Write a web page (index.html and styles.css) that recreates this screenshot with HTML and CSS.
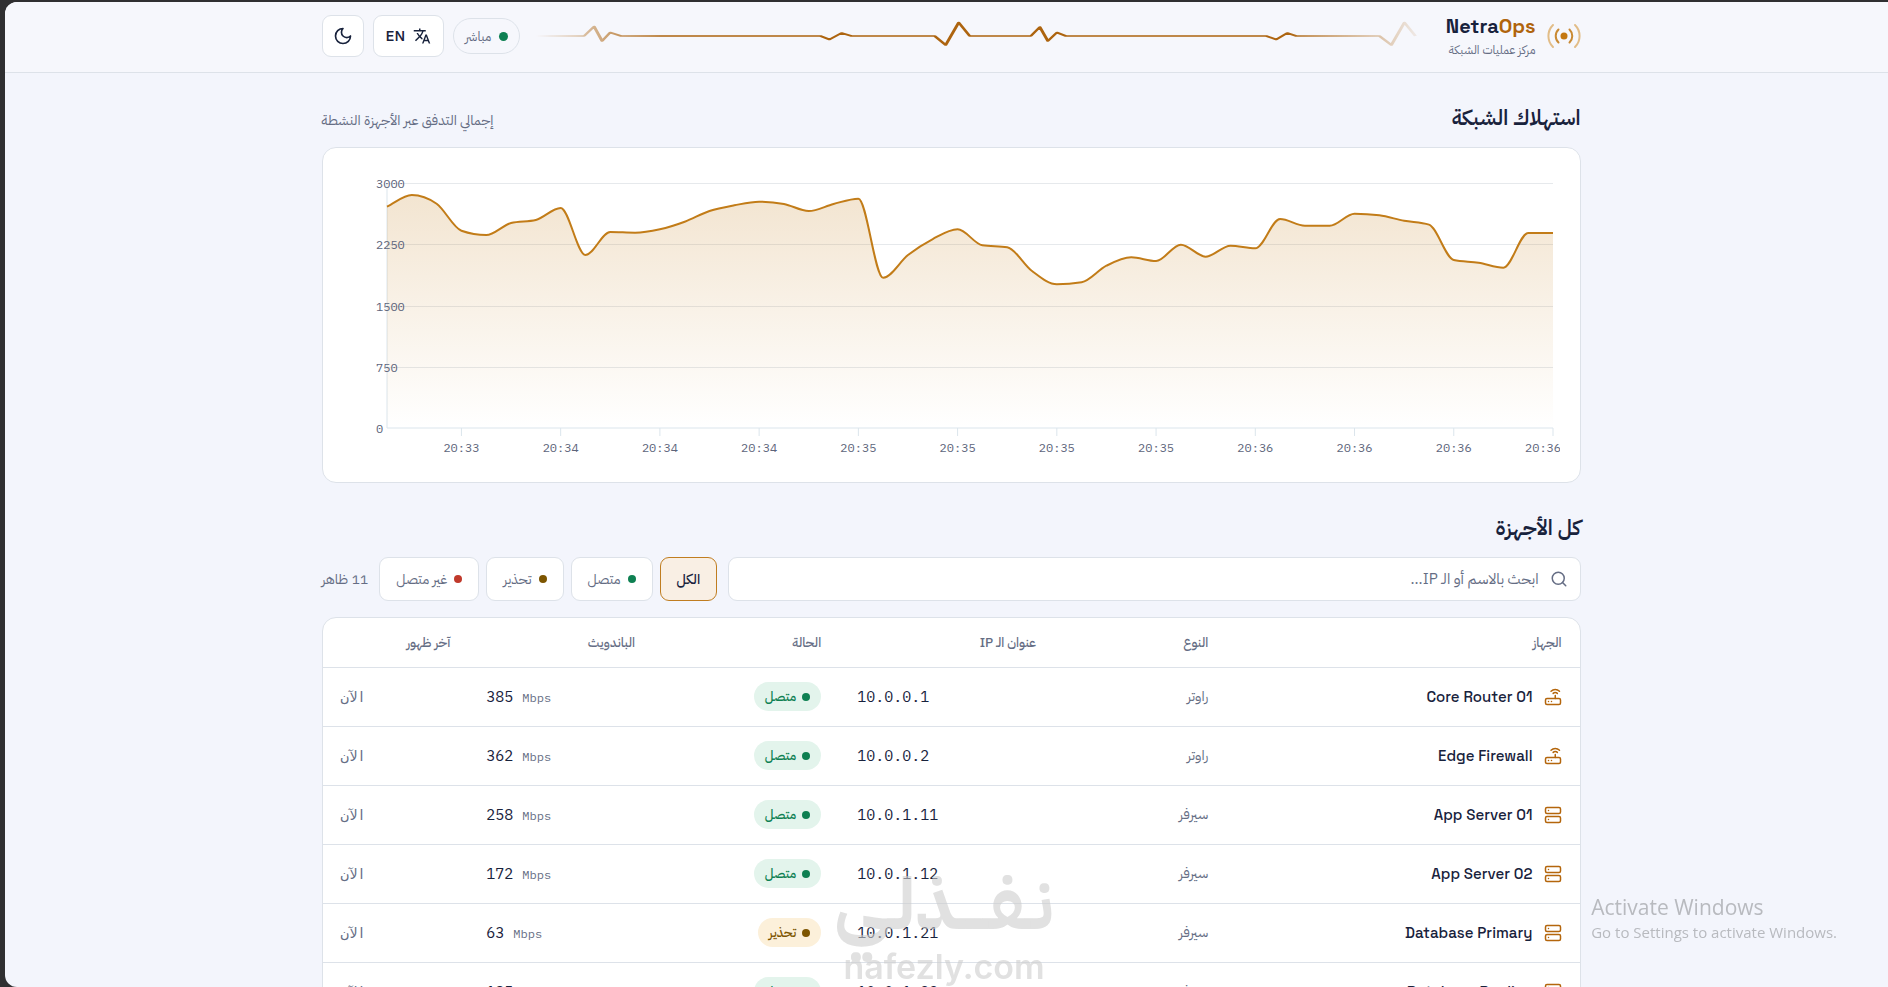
FILE: index.html
```html
<!DOCTYPE html>
<html lang="ar" dir="rtl">

<head>
    <meta charset="UTF-8">
    <meta name="viewport" content="width=device-width, initial-scale=1.0">
    <title>NetraOps</title>
    <link rel="stylesheet" href="styles.css">
</head>

<body>
    <!-- icons -->
    <svg class="sprite" aria-hidden="true">
        <symbol id="i-router" viewBox="0 0 24 24">
            <rect width="20" height="8" x="2" y="14" rx="2" />
            <path d="M6.01 18H6M10.01 18H10M15 10v4M17.84 7.17a4 4 0 0 0-5.66 0M20.66 4.34a8 8 0 0 0-11.31 0" />
        </symbol>
        <symbol id="i-server" viewBox="0 0 24 24">
            <rect width="20" height="8" x="2" y="2" rx="2" />
            <rect width="20" height="8" x="2" y="14" rx="2" />
            <path d="M6 6h.01M6 18h.01" />
        </symbol>
    </svg>

    <div class="window">
        <header class="topbar">
            <div class="container topbar-inner">
                <div class="brand">
                    <svg class="brand-icon" viewBox="0 0 34 28" aria-hidden="true">
                        <circle cx="17" cy="14" r="3.5" />
                        <path d="M11.500 7.500a9 9 0 0 0 0 13M22.500 7.500a9 9 0 0 1 0 13" />
                        <path class="far" d="M6 3a15.500 15.500 0 0 0 0 22M28 3a15.500 15.500 0 0 1 0 22" />
                    </svg>
                    <div class="brand-text">
                        <strong dir="ltr">Netra<span>Ops</span></strong>
                        <small>مركز عمليات الشبكة</small>
                    </div>
                </div>

                <svg class="pulse" viewBox="0 0 446 36" preserveAspectRatio="none" aria-hidden="true">
                    <path d="M0 18H24L29 8.500L33 23L37 14.500L42.500 18H142L146.500 21.500L152.500 15L157.500 18H199L204.500 27L211 4.500L216.500 18H247L251.500 9L255.500 23L260 14.500L264.500 18H364.500L369.500 21.500L375 15L379.500 18H421L427 27L433.500 4.500L439 18" />
                </svg>

                <div class="tools">
                    <span class="live"><i class="dot green"></i>مباشر</span>
                    <button class="tool lang" type="button">
                        <svg viewBox="0 0 24 24" aria-hidden="true">
                            <path d="M12.870 15.070l-2.540-2.510.030-.030A17.520 17.520 0 0 0 14.070 6H17V4h-7V2H8v2H1v2h11.170C11.500 7.920 10.440 9.750 9 11.350 8.070 10.320 7.300 9.190 6.690 8h-2c.730 1.630 1.730 3.170 2.980 4.560l-5.090 5.020L4 19l5-5 3.110 3.110.760-2.040zM18.500 10h-2L12 22h2l1.120-3h4.750L21 22h2l-4.500-12zm-2.620 7l1.620-4.330L19.120 17h-3.240z" />
                        </svg>
                        <span>EN</span>
                    </button>
                    <button class="tool theme" type="button" aria-label="الوضع الداكن">
                        <svg viewBox="0 0 24 24" aria-hidden="true">
                            <path d="M12 3a6 6 0 0 0 9 9 9 9 0 1 1-9-9Z" />
                        </svg>
                    </button>
                </div>
            </div>
        </header>

        <main class="container">
            <section class="usage">
                <div class="section-head">
                    <h2>استهلاك الشبكة</h2>
                    <p>إجمالي التدفق عبر الأجهزة النشطة</p>
                </div>
                <div class="card chart-card">
                    <svg class="chart" id="chart" direction="ltr"></svg>
                </div>
            </section>

            <section class="devices">
                <h2>كل الأجهزة</h2>
                <div class="filters">
                    <label class="search">
                        <svg viewBox="0 0 24 24" aria-hidden="true">
                            <circle cx="11" cy="11" r="8" />
                            <path d="m21 21-4.300-4.300" />
                        </svg>
                        <input type="text" placeholder="ابحث بالاسم أو الـ IP..." aria-label="ابحث بالاسم أو الـ IP">
                    </label>
                    <div class="chips">
                        <button class="chip active" type="button">الكل</button>
                        <button class="chip" type="button"><i class="dot green"></i>متصل</button>
                        <button class="chip" type="button"><i class="dot amber"></i>تحذير</button>
                        <button class="chip" type="button"><i class="dot red"></i>غير متصل</button>
                    </div>
                    <span class="count">11 ظاهر</span>
                </div>

                <div class="card table-card">
                    <table>
                        <thead>
                            <tr>
                                <th class="c-name">الجهاز</th>
                                <th class="c-type">النوع</th>
                                <th class="c-ip">عنوان الـ IP</th>
                                <th class="c-status">الحالة</th>
                                <th class="c-band">الباندويث</th>
                                <th class="c-seen">آخر ظهور</th>
                            </tr>
                        </thead>
                        <tbody>
                            <tr>
                                <td><div class="device"><svg><use href="#i-router" /></svg><span dir="ltr">Core Router 01</span></div></td>
                                <td class="type">راوتر</td>
                                <td class="ip" dir="ltr">10.0.0.1</td>
                                <td><span class="status up"><i class="dot green"></i>متصل</span></td>
                                <td class="band" dir="ltr">385 <small>Mbps</small></td>
                                <td class="seen" dir="ltr">الآن</td>
                            </tr>
                            <tr>
                                <td><div class="device"><svg><use href="#i-router" /></svg><span dir="ltr">Edge Firewall</span></div></td>
                                <td class="type">راوتر</td>
                                <td class="ip" dir="ltr">10.0.0.2</td>
                                <td><span class="status up"><i class="dot green"></i>متصل</span></td>
                                <td class="band" dir="ltr">362 <small>Mbps</small></td>
                                <td class="seen" dir="ltr">الآن</td>
                            </tr>
                            <tr>
                                <td><div class="device"><svg><use href="#i-server" /></svg><span dir="ltr">App Server 01</span></div></td>
                                <td class="type">سيرفر</td>
                                <td class="ip" dir="ltr">10.0.1.11</td>
                                <td><span class="status up"><i class="dot green"></i>متصل</span></td>
                                <td class="band" dir="ltr">258 <small>Mbps</small></td>
                                <td class="seen" dir="ltr">الآن</td>
                            </tr>
                            <tr>
                                <td><div class="device"><svg><use href="#i-server" /></svg><span dir="ltr">App Server 02</span></div></td>
                                <td class="type">سيرفر</td>
                                <td class="ip" dir="ltr">10.0.1.12</td>
                                <td><span class="status up"><i class="dot green"></i>متصل</span></td>
                                <td class="band" dir="ltr">172 <small>Mbps</small></td>
                                <td class="seen" dir="ltr">الآن</td>
                            </tr>
                            <tr>
                                <td><div class="device"><svg><use href="#i-server" /></svg><span dir="ltr">Database Primary</span></div></td>
                                <td class="type">سيرفر</td>
                                <td class="ip" dir="ltr">10.0.1.21</td>
                                <td><span class="status warn"><i class="dot amber"></i>تحذير</span></td>
                                <td class="band" dir="ltr">63 <small>Mbps</small></td>
                                <td class="seen" dir="ltr">الآن</td>
                            </tr>
                            <tr>
                                <td><div class="device"><svg><use href="#i-server" /></svg><span dir="ltr">Database Replica</span></div></td>
                                <td class="type">سيرفر</td>
                                <td class="ip" dir="ltr">10.0.1.22</td>
                                <td><span class="status up"><i class="dot green"></i>متصل</span></td>
                                <td class="band" dir="ltr">185 <small>Mbps</small></td>
                                <td class="seen" dir="ltr">الآن</td>
                            </tr>
                        </tbody>
                    </table>
                </div>
            </section>
        </main>
    </div>

    <div class="watermark">
        <b>نـفــــذلـي</b>
        <span dir="ltr">nafezly.com</span>
    </div>

    <div class="activate" dir="ltr">
        <strong>Activate Windows</strong>
        <span>Go to Settings to activate Windows.</span>
    </div>

    <script src="chart.js"></script>
</body>

</html>
```

FILE: styles.css
```css
* {
    box-sizing: border-box;
}

body {
    margin: 0;
    background-color: #2f2f31;
    color: #18223c;
    font-family: "IBM Plex Sans Arabic", "Noto Sans Arabic", "Noto Sans", "DejaVu Sans", sans-serif;
    font-size: 14px;
    overflow: hidden;
}

button,
input {
    font-family: inherit;
    color: inherit;
}

h2,
p {
    margin: 0;
}

h2 {
    font-size: 21px;
    line-height: 32px;
    font-weight: 600;
}

.sprite {
    display: none;
}

.window {
    height: calc(100vh - 2px);
    margin: 2px 0 0 5px;
    padding-left: 9px;
    border-radius: 12px 0 0 12px;
    background-color: #f3f5fc;
    overflow: hidden;
}

.container {
    max-width: 1259px;
    margin: 0 auto;
}

/* header */
.topbar {
    margin-left: -9px;
    padding-left: 9px;
    background-color: #f6f7fc;
    border-bottom: 1px solid #dde2e9;
}

.topbar-inner {
    display: flex;
    align-items: center;
    gap: 16px;
    height: 70px;
    padding-bottom: 2px;
}

.brand {
    display: flex;
    align-items: center;
    gap: 11px;
}

.brand-icon {
    width: 34px;
    height: 28px;
    fill: none;
    stroke: #c98a34;
    stroke-width: 2;
    stroke-linecap: round;
}

.brand-icon circle {
    fill: #c47812;
    stroke: none;
}

.brand-icon .far {
    stroke: #e2bd88;
}

.brand-text strong,
.brand-text small {
    display: block;
}

.brand-text strong {
    font-family: "Space Grotesk", Inter, sans-serif;
    font-size: 20px;
    line-height: 28px;
    font-weight: 700;
}

.brand-text strong span {
    color: #b0640c;
}

.brand-text small {
    color: #656d84;
    font-size: 12px;
    line-height: 20px;
}

.pulse {
    flex: 1;
    min-width: 0;
    height: 36px;
    fill: none;
    stroke: #ad640f;
    stroke-width: 1.6;
    stroke-linejoin: round;
    -webkit-mask-image: linear-gradient(to right, transparent, #000 14%, #000 84%, transparent);
    mask-image: linear-gradient(to right, transparent, #000 14%, #000 84%, transparent);
}

.tools {
    display: flex;
    align-items: center;
    gap: 9px;
}

.dot {
    flex: none;
    width: 8px;
    height: 8px;
    border-radius: 50%;
}

.dot.green {
    background-color: #0e8052;
}

.dot.amber {
    background-color: #7d5500;
}

.dot.red {
    background-color: #c0392b;
}

.live {
    display: flex;
    align-items: center;
    gap: 8px;
    height: 36px;
    padding: 0 11px;
    border: 1px solid #dde2e9;
    border-radius: 18px;
    color: #656d84;
    font-size: 13px;
}

.live .dot {
    width: 9px;
    height: 9px;
}

.tool {
    display: flex;
    align-items: center;
    justify-content: center;
    gap: 8px;
    height: 42px;
    padding: 0 12px;
    border: 1px solid #dde2e9;
    border-radius: 9px;
    background-color: #fff;
    font-size: 15px;
    font-weight: 500;
}

.tool svg {
    width: 18px;
    height: 18px;
    fill: currentColor;
}

.theme {
    width: 42px;
    padding: 0;
}

.theme svg {
    width: 20px;
    height: 20px;
    fill: none;
    stroke: currentColor;
    stroke-width: 2;
    stroke-linejoin: round;
}

/* cards */
.card {
    border: 1px solid #dde2e9;
    border-radius: 14px;
    background-color: #fff;
}

.usage {
    padding-top: 29px;
}

.section-head {
    display: flex;
    align-items: baseline;
    justify-content: space-between;
    margin-bottom: 13px;
}

.section-head p {
    color: #656d84;
    font-size: 14px;
}

.chart-card {
    padding: 20px;
}

.chart {
    display: block;
    width: 100%;
    height: 294px;
    font-family: "IBM Plex Mono", "Liberation Mono", monospace;
    font-size: 12px;
}

.chart text {
    fill: #5d657b;
}

.chart .grid {
    stroke: #64748b;
    stroke-opacity: 0.16;
}

.chart .axis {
    stroke: #dbe5ec;
}

.chart .line {
    fill: none;
    stroke: #c27c18;
    stroke-width: 2;
}

/* devices */
.devices {
    padding-top: 29px;
}

.filters {
    display: flex;
    align-items: center;
    gap: 11px;
    margin: 13px 0 16px;
}

.search {
    flex: 1;
    display: flex;
    align-items: center;
    gap: 11px;
    height: 44px;
    padding: 0 12px;
    border: 1px solid #dde2e9;
    border-radius: 9px;
    background-color: #fff;
    color: #656d84;
}

.search svg {
    width: 18px;
    height: 18px;
    fill: none;
    stroke: currentColor;
    stroke-width: 2;
    stroke-linecap: round;
}

.search input {
    flex: 1;
    min-width: 0;
    padding: 0;
    border: none;
    outline: none;
    background: none;
    font-size: 15px;
}

.search input::placeholder {
    color: #656d84;
    opacity: 1;
}

.chips {
    display: flex;
    gap: 7px;
}

.chip {
    display: flex;
    align-items: center;
    gap: 7px;
    height: 44px;
    padding: 0 16px;
    border: 1px solid #dde2e9;
    border-radius: 9px;
    background-color: #fff;
    color: #656d84;
    font-size: 14px;
}

.chip.active {
    border-color: #c07d20;
    background-color: #f9efe4;
    color: #18223c;
    font-weight: 500;
}

.count {
    color: #656d84;
    font-size: 14px;
}

.table-card {
    overflow: hidden;
}

table {
    width: 100%;
    table-layout: fixed;
    border-collapse: collapse;
}

th,
td {
    padding: 0 18px;
    text-align: right;
}

th {
    height: 49px;
    color: #656d84;
    font-size: 13px;
    font-weight: 500;
}

td {
    height: 59px;
    border-top: 1px solid #dde2e9;
}

.c-name {
    width: 28.1%;
}

.c-type {
    width: 13.7%;
}

.c-ip {
    width: 17.1%;
}

.c-status {
    width: 14.8%;
}

.c-band {
    width: 14.7%;
}

.c-seen {
    width: 11.6%;
}

.device {
    display: flex;
    align-items: center;
    gap: 11px;
    font-family: "Space Grotesk", Inter, sans-serif;
    font-size: 15px;
    font-weight: 500;
}

.device svg {
    width: 18px;
    height: 18px;
    fill: none;
    stroke: #b4660c;
    stroke-width: 2;
    stroke-linecap: round;
    stroke-linejoin: round;
}

.type {
    color: #656d84;
}

.ip,
.band,
.seen {
    font-family: "IBM Plex Mono", "Liberation Mono", monospace;
    font-size: 15px;
    text-align: left;
}

.band small {
    color: #656d84;
    font-size: 12px;
}

.seen {
    color: #656d84;
    font-size: 14px;
}

.status {
    display: inline-flex;
    align-items: center;
    gap: 6px;
    height: 29px;
    padding: 0 11px;
    border-radius: 15px;
    font-size: 13px;
    font-weight: 500;
}

.status.up {
    background-color: #e3f4ec;
    color: #0e8052;
}

.status.warn {
    background-color: #fcf0da;
    color: #7d5500;
}

/* overlays */
.watermark {
    position: fixed;
    bottom: 0;
    left: 836px;
    width: 216px;
    display: flex;
    flex-direction: column;
    align-items: center;
    color: #cdcdcd;
    opacity: 0.6;
    white-space: nowrap;
    pointer-events: none;
}

.watermark b {
    font-size: 72px;
    line-height: 84px;
}

.watermark span {
    font-family: Inter, sans-serif;
    font-size: 34px;
    line-height: 40px;
    font-weight: 600;
}

.activate {
    position: fixed;
    right: 51px;
    bottom: 44px;
    color: #b8babf;
    font-family: "Segoe UI", "Open Sans", sans-serif;
    pointer-events: none;
}

.activate strong,
.activate span {
    display: block;
}

.activate strong {
    font-size: 21px;
    line-height: 28px;
    font-weight: 400;
}

.activate span {
    font-size: 15px;
    line-height: 22px;
}
```

FILE: chart.js
```js
const values = [
    2710, 2853, 2746, 2416, 2363, 2510, 2547, 2694, 2118, 2400, 2391, 2433,
    2526, 2657, 2727, 2771, 2743, 2657, 2743, 2808, 1840, 2118, 2314, 2433,
    2237, 2212, 1922, 1759, 1784, 1987, 2090, 2045, 2245, 2098, 2232, 2200,
    2559, 2477, 2477, 2624, 2604, 2538, 2490, 2057, 2024, 1963, 2388, 2388
];
const times = ['20:33', '20:34', '20:34', '20:34', '20:35', '20:35', '20:35', '20:35', '20:36', '20:36', '20:36', '20:36'];
const max = 3000;
const chart = document.querySelector('#chart');

// monotone cubic, so the curve never overshoots a sample
function curve(pts) {
    const n = pts.length;
    const slope = [];
    for (let i = 0; i < n - 1; i++) {
        slope.push((pts[i + 1][1] - pts[i][1]) / (pts[i + 1][0] - pts[i][0]));
    }
    const m = [slope[0]];
    for (let i = 1; i < n - 1; i++) {
        const a = slope[i - 1], b = slope[i];
        m.push(a * b <= 0 ? 0 : Math.sign(a) * Math.min(Math.abs(a), Math.abs(b), Math.abs(a + b) / 4) * 2);
    }
    m.push(slope[n - 2]);
    let d = `M${pts[0]}`;
    for (let i = 0; i < n - 1; i++) {
        const [x0, y0] = pts[i], [x1, y1] = pts[i + 1];
        const h = (x1 - x0) / 3;
        d += `C${x0 + h},${y0 + m[i] * h} ${x1 - h},${y1 - m[i + 1] * h} ${x1},${y1}`;
    }
    return d;
}

function draw() {
    const width = chart.clientWidth;
    const left = 44, right = width - 7, top = 15, bottom = 260;
    const step = (right - left) / (values.length - 1);
    const pts = values.map((v, i) => [left + i * step, bottom - v / max * (bottom - top)]);
    const line = curve(pts);
    let grid = '', labels = '';

    for (let v = 0; v <= max; v += 750) {
        const y = Math.round(bottom - v / max * (bottom - top)) + 0.5;
        if (v) grid += `<line class="grid" x1="${left}" x2="${right}" y1="${y}" y2="${y}"/>`;
        labels += `<text x="${left - 11}" y="${y + 4}">${v}</text>`;
    }
    times.forEach((t, i) => {
        const x = left + (3 + i * 4) * step;
        grid += `<line class="axis" x1="${x}" x2="${x}" y1="${bottom}" y2="${bottom + 8}"/>`;
        labels += `<text text-anchor="middle" x="${Math.min(x, width - 17)}" y="284">${t}</text>`;
    });

    chart.innerHTML = `
        <defs>
            <linearGradient id="fill" x1="0" y1="0" x2="0" y2="1">
                <stop offset="0" stop-color="#c27c18" stop-opacity="0.2"/>
                <stop offset="1" stop-color="#c27c18" stop-opacity="0"/>
            </linearGradient>
        </defs>
        ${grid}
        <path class="axis" fill="none" d="M${left} ${top}V${bottom}H${right}"/>
        <path fill="url(#fill)" d="${line}L${right},${bottom}L${left},${bottom}Z"/>
        <path class="line" d="${line}"/>
        ${labels}`;
}

draw();
window.onresize = draw;
```
